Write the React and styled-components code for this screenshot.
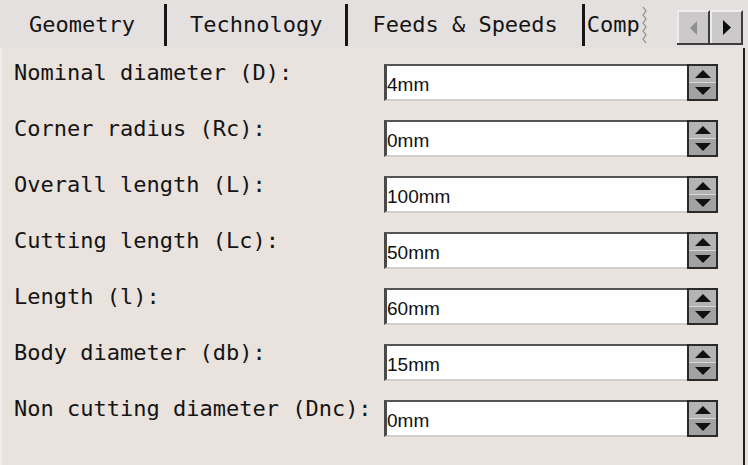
import React from "react";
import styled, { createGlobalStyle } from "styled-components";

const Global = createGlobalStyle`
  html, body { margin: 0; padding: 0; background: #e9e2dd; }
  body { font-family: "DejaVu Sans Mono", "Liberation Mono", monospace; }
`;

const Window = styled.div`
  width: 748px;
  height: 465px;
  display: flex;
  flex-direction: column;
  overflow: hidden;
  background: #e9e2dd;
`;

const TabBar = styled.div`
  height: 48px;
  box-sizing: border-box;
  padding-top: 4px;
  display: flex;
  align-items: flex-start;
  background: #e5e0e0;
`;

const Tab = styled.div`
  height: 42px;
  line-height: 42px;
  padding: 0 ${(p) => p.$pad}px;
  border-right: 3px solid #161616;
  font-size: 22px;
  color: #151515;
  white-space: nowrap;
`;

const ClippedTab = styled.div`
  width: 64px;
  height: 42px;
  line-height: 40px;
  padding-left: 2px;
  overflow: hidden;
  font-size: 22px;
  color: #151515;
  white-space: nowrap;
  display: flex;
  align-items: center;
`;

const Clip = styled.svg`
  width: 8px;
  height: 40px;
  flex: none;
`;

const Spacer = styled.div`
  flex: 1;
`;

const ScrollGroup = styled.div`
  margin-top: 6px;
  margin-right: 5px;
  display: flex;
  height: 33px;
  border-bottom: 2px solid #3c3c3c;
`;

const ScrollBtn = styled.div`
  width: 33px;
  height: 33px;
  box-sizing: border-box;
  background: #cbc9c9;
  border-top: 2px solid #ececec;
  border-left: 2px solid #ececec;
  border-right: 2px solid #3c3c3c;
  display: flex;
  align-items: center;
  justify-content: center;
`;

const Body = styled.div`
  flex: 1;
  margin-right: 3px;
  border-right: 2px solid #1e1e1e;
  border-left: 2px solid #f1ece9;
  padding: 16px 0 0 12px;
  display: flex;
  flex-direction: column;
  gap: 19px;
`;

const Row = styled.div`
  display: grid;
  grid-template-columns: 370px 334px;
  height: 37px;
`;

const Label = styled.div`
  margin-top: -2px;
  font-size: 22px;
  line-height: 22px;
  color: #141414;
  white-space: nowrap;
`;

const Field = styled.div`
  display: flex;
  box-sizing: border-box;
  height: 37px;
  border-top: 2px solid #555;
  border-left: 3px solid #4a4a4a;
  border-bottom: 2px solid #cfcfcf;
  background: #fff;
`;

const Value = styled.div`
  flex: 1;
  font-family: "Liberation Sans", Arial, sans-serif;
  font-size: 19px;
  line-height: 33px;
  padding-top: 2px;
  color: #111;
`;

const Spin = styled.div`
  width: 31px;
  margin-top: -2px;
  margin-bottom: -2px;
  box-sizing: border-box;
  border: 2px solid #2a2a2a;
  display: flex;
  flex-direction: column;
  background: #a9a9a9;
`;

const SpinHalf = styled.div`
  flex: 1;
  display: flex;
  align-items: center;
  justify-content: center;
  background: ${(p) => (p.$up ? "#b4b4b4" : "#a2a2a2")};
  border-top: ${(p) => (p.$up ? "none" : "1px solid #d8d8d8")};
`;

const Arrow = ({ dir, color = "#111", w = 16, h = 8 }) => (
  <svg width={w} height={h} viewBox={`0 0 ${w} ${h}`}>
    {dir === "up" && <polygon points={`0,${h} ${w},${h} ${w / 2},0`} fill={color} />}
    {dir === "down" && <polygon points={`0,0 ${w},0 ${w / 2},${h}`} fill={color} />}
    {dir === "left" && <polygon points={`${w},0 ${w},${h} 0,${h / 2}`} fill={color} />}
    {dir === "right" && <polygon points={`0,0 0,${h} ${w},${h / 2}`} fill={color} />}
  </svg>
);

const rows = [
  ["Nominal diameter (D):", "4mm"],
  ["Corner radius (Rc):", "0mm"],
  ["Overall length (L):", "100mm"],
  ["Cutting length (Lc):", "50mm"],
  ["Length (l):", "60mm"],
  ["Body diameter (db):", "15mm"],
  ["Non cutting diameter (Dnc):", "0mm"],
];

export default function App() {
  return (
    <Window>
      <Global />
      <TabBar>
        <Tab $pad={29}>Geometry</Tab>
        <Tab $pad={23}>Technology</Tab>
        <Tab $pad={24}>Feeds &amp; Speeds</Tab>
        <ClippedTab>
          <span>Comp</span>
          <Clip viewBox="0 0 8 40">
            <polyline
              points="3,2 6,6 3,10 6,14 3,18 6,22 3,26 6,30 3,34 6,38"
              fill="none"
              stroke="#8a8a8a"
              strokeWidth="1.2"
            />
          </Clip>
        </ClippedTab>
        <Spacer />
        <ScrollGroup>
          <ScrollBtn>
            <Arrow dir="left" color="#8f8f8f" w={7} h={14} />
          </ScrollBtn>
          <ScrollBtn>
            <Arrow dir="right" color="#0c0c0c" w={8} h={15} />
          </ScrollBtn>
        </ScrollGroup>
      </TabBar>
      <Body>
        {rows.map(([label, value]) => (
          <Row key={label}>
            <Label>{label}</Label>
            <Field>
              <Value>{value}</Value>
              <Spin>
                <SpinHalf $up>
                  <Arrow dir="up" w={16} h={8} />
                </SpinHalf>
                <SpinHalf>
                  <Arrow dir="down" w={16} h={8} />
                </SpinHalf>
              </Spin>
            </Field>
          </Row>
        ))}
      </Body>
    </Window>
  );
}
